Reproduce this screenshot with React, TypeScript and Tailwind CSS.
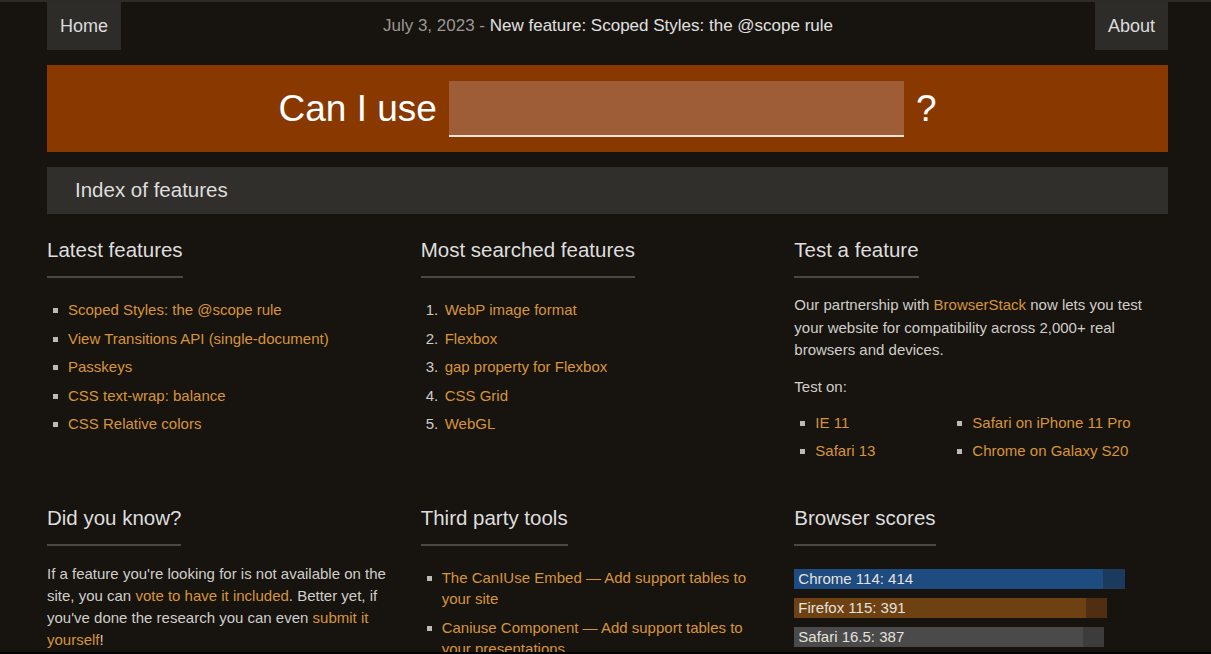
import React from 'react';

const latest = [
  'Scoped Styles: the @scope rule',
  'View Transitions API (single-document)',
  'Passkeys',
  'CSS text-wrap: balance',
  'CSS Relative colors',
];

const searched = ['WebP image format', 'Flexbox', 'gap property for Flexbox', 'CSS Grid', 'WebGL'];

const scores = [
  { label: 'Chrome 114: 414', total: 331, fill: 309, bg: 'bg-[#1b3a5e]', fg: 'bg-[#1e4b80]' },
  { label: 'Firefox 115: 391', total: 313, fill: 292, bg: 'bg-[#4f2e11]', fg: 'bg-[#6e4113]' },
  { label: 'Safari 16.5: 387', total: 310, fill: 289, bg: 'bg-[#3c3c3c]', fg: 'bg-[#4a4a4a]' },
];

function Heading({ children }: { children: React.ReactNode }) {
  return (
    <h2 className="inline-block text-[20.5px] leading-[24px] text-[#dedede] pb-[14px] border-b-2 border-[#4a4845]">
      {children}
    </h2>
  );
}

function Bullet({ children }: { children: React.ReactNode }) {
  return (
    <li className="flex items-start">
      <span className="mt-[12px] ml-[6px] mr-[10px] w-[5px] h-[5px] shrink-0 bg-[#bdbab5]" />
      <span>{children}</span>
    </li>
  );
}

export default function App() {
  return (
    <div
      className="h-[654px] overflow-hidden bg-[#17130e] border-t-2 border-[#2c2b29] border-b-2 border-b-black text-[15px]"
      style={{ fontFamily: '"Liberation Sans", Arial, sans-serif' }}
    >
      <div className="ml-[47px] w-[1121px]">
        {/* top nav */}
        <div className="flex items-center justify-between h-[48px]">
          <a className="h-full px-[13px] flex items-center bg-[#2e2c29] text-[18px] text-[#dcdcdc]">Home</a>
          <div className="text-[17px] text-[#9a9894]">
            July 3, 2023 - <span className="text-[#e0e0e0]">New feature: Scoped Styles: the @scope rule</span>
          </div>
          <a className="h-full px-[13px] flex items-center bg-[#2e2c29] text-[18px] text-[#dcdcdc]">About</a>
        </div>

        {/* search banner */}
        <div className="mt-[15px] h-[87px] bg-[#893800] flex items-center justify-center gap-[12px]">
          <span className="text-[37px] text-white">Can I use</span>
          <div className="w-[455px] h-[56px] bg-[#9e5d36] border-b-2 border-[#f2e6dc]" />
          <span className="text-[37px] text-white">?</span>
        </div>

        {/* index bar */}
        <div className="mt-[15px] h-[47px] bg-[#312f2c] flex items-center pl-[28px] text-[20.5px] text-[#dedede]">
          Index of features
        </div>

        {/* sections */}
        <div className="grid grid-cols-3 mt-[24px] gap-y-[41px]">
          <section>
            <Heading>Latest features</Heading>
            <ul className="mt-[18px] leading-[28.5px] text-[#d6953c]">
              {latest.map((t) => (
                <Bullet key={t}>{t}</Bullet>
              ))}
            </ul>
          </section>

          <section>
            <Heading>Most searched features</Heading>
            <ol className="mt-[18px] leading-[28.5px] text-[#d6953c]">
              {searched.map((t, i) => (
                <li key={t} className="flex">
                  <span className="w-[24px] pl-[5px] text-[#cfcdc9]">{i + 1}.</span>
                  <span>{t}</span>
                </li>
              ))}
            </ol>
          </section>

          <section>
            <Heading>Test a feature</Heading>
            <p className="mt-[16px] leading-[22.5px] text-[#d0cecb] w-[360px]">
              Our partnership with <a className="text-[#d6953c]">BrowserStack</a> now lets you test your website for
              compatibility across 2,000+ real browsers and devices.
            </p>
            <p className="mt-[14px] leading-[22.5px] text-[#d0cecb]">Test on:</p>
            <ul className="mt-[11px] grid grid-cols-[157px_1fr] leading-[28px] text-[#d6953c]">
              <Bullet>IE 11</Bullet>
              <Bullet>Safari on iPhone 11 Pro</Bullet>
              <Bullet>Safari 13</Bullet>
              <Bullet>Chrome on Galaxy S20</Bullet>
            </ul>
          </section>

          <section>
            <Heading>Did you know?</Heading>
            <p className="mt-[17px] leading-[22px] text-[#d0cecb] w-[350px]">
              If a feature you're looking for is not available on the site, you can{' '}
              <a className="text-[#d6953c]">vote to have it included</a>. Better yet, if you've done the research you
              can even <a className="text-[#d6953c]">submit it yourself</a>!
            </p>
          </section>

          <section>
            <Heading>Third party tools</Heading>
            <ul className="mt-[21px] leading-[21px] text-[#d6953c] w-[340px] flex flex-col gap-[8px]">
              <li className="flex items-start">
                <span className="mt-[9px] ml-[6px] mr-[10px] w-[5px] h-[5px] shrink-0 bg-[#bdbab5]" />
                <span>The CanIUse Embed — Add support tables to your site</span>
              </li>
              <li className="flex items-start">
                <span className="mt-[9px] ml-[6px] mr-[10px] w-[5px] h-[5px] shrink-0 bg-[#bdbab5]" />
                <span>Caniuse Component — Add support tables to your presentations</span>
              </li>
            </ul>
          </section>

          <section>
            <Heading>Browser scores</Heading>
            <div className="mt-[23px] flex flex-col gap-[9px]">
              {scores.map((s) => (
                <div key={s.label} className={`relative h-[20px] ${s.bg}`} style={{ width: s.total }}>
                  <div className={`h-full ${s.fg}`} style={{ width: s.fill }} />
                  <span className="absolute inset-0 pl-[4px] leading-[20px] text-[#e4e2de]">{s.label}</span>
                </div>
              ))}
            </div>
          </section>
        </div>
      </div>
    </div>
  );
}
